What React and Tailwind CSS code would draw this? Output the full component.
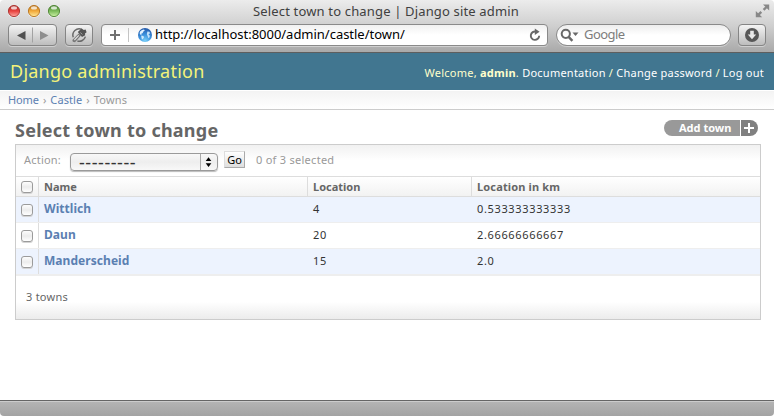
const rows = [
  { name: "Wittlich", location: "4", km: "0.533333333333" },
  { name: "Daun", location: "20", km: "2.66666666667" },
  { name: "Manderscheid", location: "15", km: "2.0" },
];

function Light({ id, dark, mid, light }) {
  return (
    <svg width="14" height="14" viewBox="0 0 14 14">
      <defs>
        <linearGradient id={id} x1="0" y1="0" x2="0" y2="1">
          <stop offset="0" stopColor={dark} />
          <stop offset="0.5" stopColor={mid} />
          <stop offset="1" stopColor={light} />
        </linearGradient>
      </defs>
      <circle cx="7" cy="7.5" r="6.2" fill="#fff" opacity="0.5" />
      <circle cx="7" cy="7" r="5.6" fill={`url(#${id})`} stroke={dark} strokeWidth="0.9" />
      <ellipse cx="7" cy="3.9" rx="3" ry="1.7" fill="#fff" opacity="0.75" />
    </svg>
  );
}

function Checkbox() {
  return (
    <span className="block h-3 w-3 rounded-[3px] border border-[#9b9b9b] bg-gradient-to-b from-[#fdfdfd] via-[#ececec] to-white shadow-[0_1px_0_#d4d4d4]" />
  );
}

const toolButton =
  "flex h-[22px] items-center rounded border border-[#858585] bg-gradient-to-b from-[#f4f4f4] to-[#bdbdbd] shadow-[0_1px_0_#d0d0d0]";

function Chrome() {
  return (
    <div className="h-[53px] rounded-t-[4px] border-b border-[#5e5e5e] bg-gradient-to-b from-[#ececec] via-[#cfcfcf] to-[#a9a9a9]">
      <div className="flex h-6 items-start pl-[7px] pr-1">
        <div className="flex w-[100px] gap-[6px] pt-[4px]">
          <Light id="red" dark="#a8302c" mid="#e8423e" light="#ffaaa2" />
          <Light id="amber" dark="#b5701c" mid="#f2a93a" light="#ffeb9c" />
          <Light id="green" dark="#4b8231" mid="#7cbb5a" light="#cdf3a6" />
        </div>
        <div className="flex-1 pl-[146px] text-[13px] leading-[23px] tracking-[0.16px] text-[#404040]">
          Select town to change | Django site admin
        </div>
        <svg className="mt-[4px]" width="15" height="14" viewBox="0 0 15 14" fill="#888" stroke="#888">
          <path d="M8 0.5h6.2v6zM0.8 7v6.2h6.4z" stroke="none" />
          <path d="M11.5 3 8.6 5.9M3.3 10.9 6.3 7.9" strokeWidth="2.4" />
        </svg>
      </div>
      <div className="flex pl-2">
        <div className={toolButton + " w-[49px]"}>
          <svg width="47" height="20" viewBox="0 0 47 20">
            <path d="M8 10.5 16.5 6v9z" fill="#505050" />
            <path d="M39.5 10.5 31 6v9z" fill="#8e8e8e" />
            <path d="M23.5 2.5v15" stroke="#a2a2a2" />
          </svg>
        </div>
        <div className={toolButton + " ml-2 w-7"}>
          <svg width="26" height="20" viewBox="0 0 26 20">
            <path d="M7.2 12.2A6.4 6.4 0 0 1 15.6 4.2M11.4 16A6.4 6.4 0 0 0 19.4 11.6" fill="none" stroke="#6a6a6a" strokeWidth="1.5" />
            <path d="M6.4 15 12.6 8.4l2.4 2.2-6 6.6-2.2-.4z" fill="#777" />
            <path d="m8.4 15 4.4-4.6" stroke="#e4e4e4" strokeWidth="1.1" />
            <path d="M11.8 7 15.6 3.4l2.2 1.6 1.8-.4 1 2.6-1.6 1.2.2 1.8-3.2 1.8z" fill="#555" />
            <path d="m14.4 7.6 2 1.8" stroke="#aaa" strokeWidth="0.9" />
          </svg>
        </div>
        <div className="ml-2 flex h-[22px] w-[447px] items-center rounded border border-[#8a8a8a] bg-gradient-to-b from-[#f0f0f0] via-white to-white text-[13px] text-black shadow-[0_1px_0_#d0d0d0]">
          <svg className="shrink-0" width="53" height="20" viewBox="0 0 53 20">
            <defs>
              <radialGradient id="globe" cx="0.5" cy="0.9" r="0.9">
                <stop offset="0" stopColor="#7ad0f8" />
                <stop offset="0.5" stopColor="#3a8fdc" />
                <stop offset="1" stopColor="#2458a8" />
              </radialGradient>
            </defs>
            <path d="M8 10h10M13 5v10" stroke="#707070" strokeWidth="2" />
            <path d="M26.5 3v14" stroke="#c4c4c4" />
            <circle cx="43" cy="10" r="7" fill="url(#globe)" />
            <path d="M37.8 7c1-1.7 2.6-2.5 4.2-2.6l.8 1.2-1.4 1-.8 1.6-1.2.4.4 1-1.2.2-.8-.8z" fill="#e2f2ff" />
            <path d="m39.2 10.4 2.2.6.6 1.2-1.4 2.2-1-.8z" fill="#cfeafc" />
            <path d="m45.4 6.6 2 .2.8 1.6-1.2.4-.4 1 1.2.6-.2 1.8-1.2 1-.8-2.2-.8-1.8z" fill="#c2e2fa" />
          </svg>
          <span className="flex-1 tracking-[-0.02px]">http://localhost:8000/admin/castle/town/</span>
          <svg className="mr-[5px]" width="14" height="14" viewBox="0 0 14 14">
            <path d="M8 3.6A4.2 4.2 0 1 0 11.2 7.8" fill="none" stroke="#686868" strokeWidth="1.9" />
            <path d="M6.8 0.6 11.6 3.8 6.8 7z" fill="#686868" />
          </svg>
        </div>
        <div className="ml-2 flex h-[22px] w-[175px] items-center rounded-full border border-[#8a8a8a] bg-gradient-to-b from-[#ededed] via-white to-white text-[13px] text-[#7d7d7d] shadow-[0_1px_0_#d0d0d0]">
          <svg width="27" height="20" viewBox="0 0 27 20">
            <circle cx="8.8" cy="8.8" r="4.1" fill="none" stroke="#686868" strokeWidth="2" />
            <path d="m11.6 11.8 3.8 4" stroke="#686868" strokeWidth="2.4" />
            <path d="M15.5 7.5h6L18.5 11z" fill="#686868" />
          </svg>
          <span className="tracking-[-0.55px]">Google</span>
        </div>
        <div className={toolButton + " ml-[7px] w-7 justify-center"}>
          <svg width="16" height="16" viewBox="0 0 16 16">
            <circle cx="8" cy="8" r="7" fill="#575757" />
            <path d="M6.2 3.8h3.6v3.7h2.4L8 12.2 3.8 7.5h2.4z" fill="#e9e9e9" />
          </svg>
        </div>
      </div>
    </div>
  );
}

export default function App() {
  return (
    <div className="flex h-[416px] w-[774px] flex-col overflow-hidden whitespace-nowrap bg-white font-['Noto_Sans','Open_Sans',sans-serif] text-[11px]">
      <Chrome />
      <header className="flex h-[37px] items-center justify-between bg-[#417690] pl-[10px] pr-[10px]">
        <h1 className="text-[18px] tracking-[0.24px] text-[#f4f379]">Django administration</h1>
        <div className="pt-[4px] tracking-[0.24px] text-[#ffffcc]">
          Welcome, <b>admin</b>. <span className="text-white">Documentation</span> /{" "}
          <span className="text-white">Change password</span> / <span className="text-white">Log out</span>
        </div>
      </header>
      <nav className="mt-px flex h-[19px] items-center gap-[4px] border-b border-[#ccc] bg-gradient-to-b from-[#f3f3f3] to-white pl-2 text-[#999]">
        <span className="tracking-[-0.1px] text-[#5b80b2]">Home</span>
        <span>›</span>
        <span className="tracking-[0.1px] text-[#5b80b2]">Castle</span>
        <span>›</span>
        <span className="tracking-[0.2px]">Towns</span>
      </nav>
      <main className="flex-1 pl-[15px] pr-[13px]">
        <div className="flex h-[34px] justify-between">
          <h2 className="pt-[8px] text-[18px] font-bold leading-6 tracking-[0.24px] text-[#666]">Select town to change</h2>
          <div className="mr-[3px] mt-[10px] flex h-4 gap-px">
            <span className="w-[76px] rounded-l-full bg-[#999] pl-[15px] font-bold leading-4 text-white">Add town</span>
            <svg className="rounded-r-full bg-[#808080]" width="17" height="16" viewBox="0 0 17 16">
              <path d="M3 8h10M8 3v10" stroke="#fff" strokeWidth="2" />
            </svg>
          </div>
        </div>
        <section className="flex h-[176px] flex-col border border-[#ccc]">
          <div className="flex h-8 items-start border-b border-[#ddd] bg-gradient-to-b from-[#f1f1f1] to-white to-50% pl-2 text-[#999]">
            <span className="w-[46px] leading-[30px] tracking-[0.2px]">Action:</span>
            <span className="mt-[8px] flex h-[18px] w-[148px] items-center rounded border border-[#9a9a9a] bg-gradient-to-b from-[#f8f8f8] via-[#eeeeee] to-[#f8f8f8] shadow-[0_1px_1px_#bbb]">
              <span className="flex-1 pl-2 text-[18px] leading-[14px] tracking-[0.55px] text-[#333]">---------</span>
              <svg className="border-l border-[#aaa]" width="17" height="16" viewBox="0 0 17 16">
                <path d="M5 7 8 3l3 4zM5 9.2h6L8 13.2z" fill="#000" />
              </svg>
            </span>
            <span className="ml-[6px] mt-[6px] h-[17px] w-[21px] border border-b-[#aaa] border-l-[#ddd] border-r-[#aaa] border-t-[#ddd] bg-gradient-to-b from-white to-[#dedede] text-center leading-[16px] text-black">
              Go
            </span>
            <span className="ml-[11px] leading-[30px] tracking-[0.27px]">0 of 3 selected</span>
          </div>
          <div className="grid h-5 grid-cols-[22px_269px_164px_1fr] border-b border-[#ddd] bg-gradient-to-b from-white to-[#f2f2f2] font-bold leading-[19px] text-[#666]">
            <div className="pl-[5px] pt-1"><Checkbox /></div>
            <div className="border-l border-[#ddd] pl-[5px]">Name</div>
            <div className="border-l border-[#ddd] pl-[5px]">Location</div>
            <div className="border-l border-[#ddd] pl-[5px] tracking-[0.15px]">Location in km</div>
          </div>
          {rows.map((row, i) => (
            <div
              key={row.name}
              className={
                "grid h-[26px] grid-cols-[22px_269px_164px_1fr] border-b border-[#eee] leading-[24px] text-[#333] " +
                (i % 2 ? "bg-white" : "bg-[#edf3fe]")
              }
            >
              <div className="pl-[5px] pt-[7px]"><Checkbox /></div>
              <div className="border-l border-[#ddd] pl-[5px] text-[12px] font-bold tracking-[0.05px] text-[#5b80b2]">{row.name}</div>
              <div className="pl-[6px] tracking-[0.6px]">{row.location}</div>
              <div className="pl-[6px] tracking-[0.65px]">{row.km}</div>
            </div>
          ))}
          <div className="flex flex-1 items-center border-t border-[#eee] bg-gradient-to-b from-white from-60% to-[#ececec] pl-[10px] tracking-[0.25px] text-[#666]">
            3 towns
          </div>
        </section>
      </main>
      <footer className="h-4 rounded-b-[4px] border-t border-[#666] bg-gradient-to-b from-[#b5b5b5] to-[#a3a3a3] shadow-[inset_0_1px_0_#ccc]" />
    </div>
  );
}
